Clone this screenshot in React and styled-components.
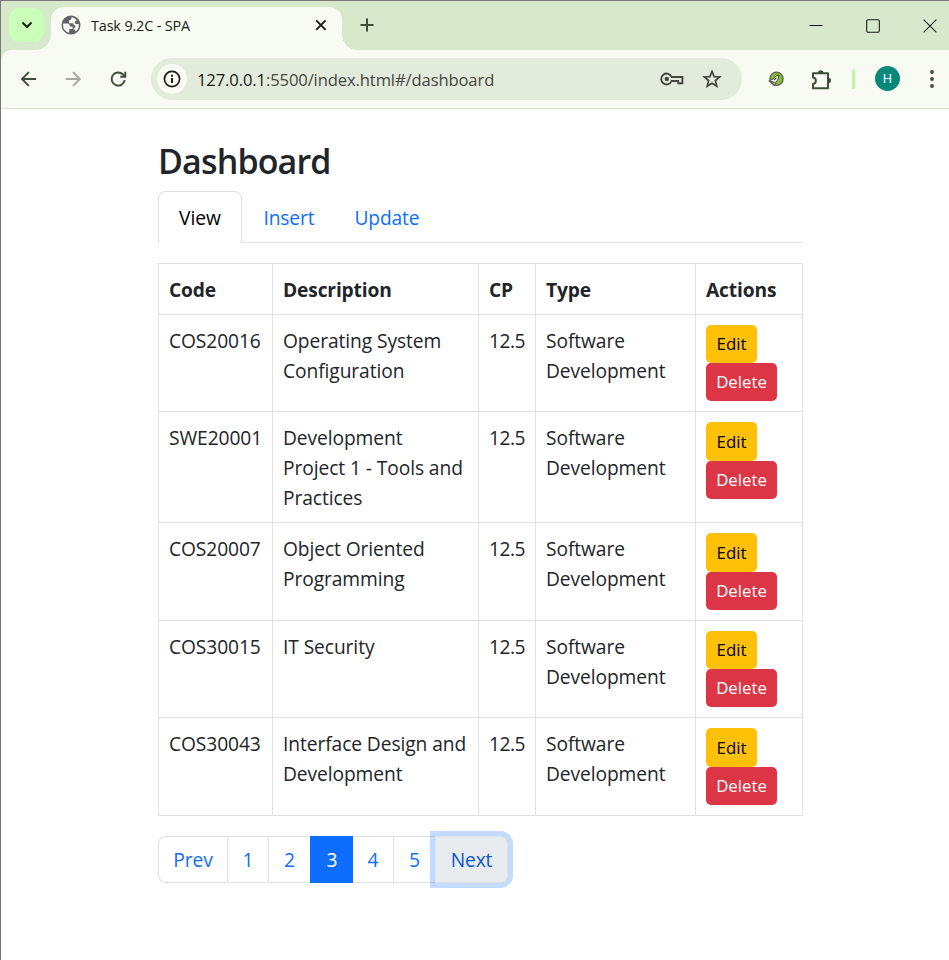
import React from 'react';
import styled, { createGlobalStyle, css } from 'styled-components';

const GlobalStyle = createGlobalStyle`
  *, *::before, *::after { box-sizing: border-box; }
  html, body { margin: 0; height: 100%; overflow: hidden; }
  body {
    background: #fff;
    color: #212529;
    font-family: "Segoe UI", "Open Sans", "Noto Sans", sans-serif;
  }
`;

const Window = styled.div`
  display: flex;
  flex-direction: column;
  width: 949px;
  height: 960px;
  border-top: 1px solid #787878;
  border-left: 1px solid #787878;
  background: #fff;
  overflow: hidden;
`;

/* ---------- browser chrome ---------- */

const TabStrip = styled.div`
  display: flex;
  flex: none;
  height: 49px;
  background: #d7e8cd;
`;

const TabSearch = styled.button`
  display: grid;
  place-items: center;
  width: 35px;
  height: 34px;
  margin: 7px 7px 0 8px;
  padding: 0;
  border: 0;
  border-radius: 11px;
  background: #c9ffb9;
  color: #161d14;
`;

const BrowserTab = styled.div`
  position: relative;
  display: flex;
  align-items: center;
  width: 291px;
  height: 43px;
  margin-top: 6px;
  padding: 0 14px 7px 10px;
  border-radius: 13px 13px 0 0;
  background: #f8fbf1;

  &::before,
  &::after {
    content: "";
    position: absolute;
    bottom: 0;
    width: 15px;
    height: 15px;
  }
  &::before {
    right: 100%;
    background: radial-gradient(circle at 0 0, transparent 14.5px, #f8fbf1 15px);
  }
  &::after {
    left: 100%;
    background: radial-gradient(circle at 100% 0, transparent 14.5px, #f8fbf1 15px);
  }
`;

const TabTitle = styled.span`
  flex: 1;
  margin-left: 10px;
  padding-top: 2px;
  color: #191d17;
  font-size: 14.4px;
  letter-spacing: -0.14px;
  line-height: 20px;
  white-space: nowrap;
`;

const GlyphButton = styled.button`
  display: grid;
  place-items: center;
  flex: none;
  width: ${(p) => p.$width || 20}px;
  height: 20px;
  padding: 0;
  border: 0;
  background: none;
  color: ${(p) => p.$color || '#3c4d38'};
`;

const NewTab = styled(GlyphButton)`
  margin: 14px 0 0 15px;
`;

const WindowControls = styled.div`
  display: flex;
  gap: 37px;
  margin: 15px 9px 0 auto;
`;

const ToolbarBacking = styled.div`
  flex: none;
  background: linear-gradient(#d7e8cd 15px, #f8fbf1 15px);
`;

const Toolbar = styled.div`
  display: flex;
  align-items: center;
  height: 59px;
  padding: 0 7px 1px 17px;
  border-bottom: 1px solid #dde5d6;
  border-top-left-radius: 11px;
  background: #f8fbf1;
`;

const NavButtons = styled.div`
  display: flex;
  gap: 25px;
`;

const AddressBar = styled.div`
  display: flex;
  flex: none;
  align-items: center;
  width: 591px;
  height: 42px;
  margin-left: 23px;
  padding: 0 20px 0 6px;
  border-radius: 21px;
  background: #e3ebdc;
`;

const SiteInfo = styled.span`
  display: grid;
  place-items: center;
  width: 30px;
  height: 30px;
  border-radius: 50%;
  background: #f8fbf1;
  color: #191d17;
`;

const Address = styled.span`
  flex: 1;
  margin-left: 10px;
  padding-top: 1px;
  color: #44483f;
  font-size: 16.6px;
  letter-spacing: -0.12px;
  white-space: nowrap;
`;

const Host = styled.span`
  color: #191d17;
`;

const AddressActions = styled.div`
  display: flex;
  align-items: center;
  gap: 18px;
`;

const Extensions = styled.div`
  display: flex;
  flex: 1;
  align-items: center;
  margin-left: 24px;
`;

const ExtensionsMenu = styled(GlyphButton)`
  margin-left: 23px;
`;

const Divider = styled.span`
  width: 3px;
  height: 20px;
  margin-left: 19px;
  border-radius: 2px;
  background: #bdf3ab;
`;

const Avatar = styled.span`
  display: grid;
  place-items: center;
  width: 25px;
  height: 25px;
  margin: 0 22px 0 auto;
  border-radius: 50%;
  background: #04897b;
  color: #fff;
  font-family: Roboto, sans-serif;
  font-size: 13px;
`;

/* ---------- page ---------- */

const Page = styled.main`
  width: 645px;
  margin: 31px 0 0 157px;
`;

const Heading = styled.h2`
  margin: 0 0 9px;
  font-size: 34px;
  font-weight: 600;
  letter-spacing: -0.85px;
  line-height: 42px;
`;

const NavTabs = styled.nav`
  display: flex;
  height: 52px;
  border-bottom: 1px solid #dee2e6;
`;

const NavTab = styled.a`
  height: 52px;
  padding: 11px 0 0 ${(p) => (p.$active ? 20 : 20.5)}px;
  border: 1px solid transparent;
  border-bottom: 0;
  border-radius: 7.5px 7.5px 0 0;
  color: #0d6efd;
  font-size: 19.2px;
  line-height: 30px;
  width: ${(p) => p.$width}px;
  letter-spacing: -0.15px;
  text-decoration: none;

  ${(p) =>
    p.$active &&
    css`
      border-color: #dee2e6;
      background: #fff;
      color: #000;
      letter-spacing: 0;
    `}
`;

const Table = styled.table`
  width: 645px;
  margin-top: 20px;
  border-collapse: collapse;
  table-layout: fixed;
  font-size: 19.2px;
  line-height: 30px;
`;

const Col = styled.col`
  width: ${(p) => p.$width}px;
`;

const Row = styled.tr`
  height: ${(p) => p.$height}px;
`;

const cell = css`
  padding: 11px 0 8px 10px;
  border: 1px solid #dee2e6;
  text-align: left;
  vertical-align: top;
  white-space: nowrap;
`;

const HeadCell = styled.th`
  ${cell}
  font-weight: 700;
  letter-spacing: -0.15px;
`;

const Cell = styled.td`
  ${cell}
  letter-spacing: ${(p) => (p.$tight ? '-0.5px' : '-0.08px')};
`;

const ActionCell = styled.td`
  ${cell}
  padding-top: 10px;
`;

const Line = styled.span`
  display: block;
`;

const Actions = styled.div`
  display: flex;
  flex-direction: column;
  align-items: flex-start;
`;

const ActionButton = styled.button`
  height: ${(p) => (p.$tall ? 39 : 38)}px;
  padding: 0;
  width: ${(p) => (p.$danger ? 71 : 51)}px;
  border: 0;
  border-radius: 5px;
  background: ${(p) => (p.$danger ? '#dc3545' : '#ffc107')};
  color: ${(p) => (p.$danger ? '#fff' : '#000')};
  font-family: inherit;
  font-size: 16.8px;
  line-height: 26px;
`;

const Pagination = styled.nav`
  display: flex;
  margin-top: 20px;
`;

const PageLink = styled.a`
  width: ${(p) => p.$width}px;
  height: 47px;
  border: 1px solid #dee2e6;
  border-right-width: 0;
  background: #fff;
  color: #0d6efd;
  font-size: 19.2px;
  letter-spacing: -0.1px;
  line-height: 46px;
  text-align: center;
  text-decoration: none;

  &:first-child {
    border-radius: 7.5px 0 0 7.5px;
  }
  &:last-child {
    border-right-width: 1px;
    border-radius: 0 7.5px 7.5px 0;
  }
  ${(p) =>
    p.$active &&
    css`
      border-color: #0d6efd;
      background: #0d6efd;
      color: #fff;
      & + a { border-left: 0; }
    `}
  ${(p) =>
    p.$focused &&
    css`
      background: #e9ecef;
      color: #0a58ca;
      box-shadow: 0 0 0 5px rgba(13, 110, 253, 0.25);
    `}
`;

/* ---------- icons ---------- */

const Svg = styled.svg`
  display: block;
  flex: none;
  fill: none;
  stroke: currentColor;
  stroke-width: ${(p) => p.$stroke || 2};
`;

const Icon = ({ w = 20, h = w, stroke, children }) => (
  <Svg width={w} height={h} viewBox={`0 0 ${w} ${h}`} $stroke={stroke}>
    {children}
  </Svg>
);

const ChevronIcon = () => <Icon w={12}><path d="M1.5 3.5 6 8l4.5-4.5" /></Icon>;
const GlobeIcon = () => (
  <Svg width="20" height="20" viewBox="2 2 20 20" color="#5f6368">
    <path
      fill="currentColor"
      stroke="none"
      d="M12 2.5a9.500 9.500 0 1 0 0 19 9.500 9.500 0 0 0 0-19ZM4 12c0-.5.1-1 .2-1.5 1.5 0 2.600 0 4 .1 1.800.1 2.700 1.100 2.800 2.800h2.600v2.700h-3.400v3.600A8 8 0 0 1 4 12Zm12.500 6.500c-.1-1.300-.9-2.100-2-2.300.2-1 .8-1.500 1.800-1.600v-2.300c-1.400-.1-2.100-.9-2.100-2.100h-4.100V7.300c1.600 0 2.500-.8 2.500-3.200a8 8 0 0 1 5.300 3.400c-1.300.1-2 .8-2 1.900 0 1 .9 1.600 2 1.700l2 .1A8 8 0 0 1 16.500 18.500Z"
    />
  </Svg>
);
const CloseIcon = () => <Icon w={12} stroke={1.9}><path d="m1.200 1.400 9.400 9.400m0-9.400-9.400 9.400" /></Icon>;
const PlusIcon = () => <Icon w={14}><path d="M7 .5v13M.5 7h13" /></Icon>;
const MinimizeIcon = () => <Icon w={14} stroke={1}><path d="M.5 6.500h13" /></Icon>;
const MaximizeIcon = () => <Icon w={14} stroke={1.1}><rect x=".7" y=".7" width="12.600" height="12.600" rx="1.200" /></Icon>;
const WindowCloseIcon = () => <Icon w={14} stroke={1.1}><path d="m.6.6 12.800 12.800m0-12.800L.6 13.400" /></Icon>;
const BackIcon = () => <Icon stroke={1.9}><path d="M18 10H4.500M10.800 3.200 4 10l6.800 6.800" /></Icon>;
const ForwardIcon = () => <Icon stroke={1.9}><path d="M2.800 10h13.500M10 3.200l6.800 6.800-6.800 6.800" /></Icon>;
const ReloadIcon = () => (
  <Icon stroke={1.9}>
    <path d="M16.700 11.200A6.600 6.600 0 1 1 14.800 5.300L17 7.500" />
    <path d="M17.300 2.700v5H12.200" />
  </Icon>
);
const InfoIcon = () => (
  <Icon w={18}>
    <circle cx="9" cy="9" r="7.600" strokeWidth="1.700" />
    <path d="M9 8v5M9 4.800v2" />
  </Icon>
);
const KeyIcon = () => (
  <Icon w={24} h={16}>
    <path d="M11.600 6H22.400v6.200h-4.200V10h-6.600A5.400 5.400 0 1 1 11.600 6Z" strokeWidth="1.900" />
    <circle cx="6.800" cy="8" r="2.200" fill="currentColor" stroke="none" />
  </Icon>
);
const StarIcon = () => (
  <Icon w={20}>
    <path d="m10 2.400 2.100 5.200 5.600.4-4.300 3.600 1.400 5.500L10 14.200l-4.800 2.900 1.400-5.500L2.300 8l5.600-.4Z" strokeWidth="1.700" />
  </Icon>
);
const RocketIcon = () => (
  <Icon w={16}>
    <circle cx="8.500" cy="7.800" r="6.600" fill="#83bd32" stroke="#5d6058" strokeWidth="1.300" />
    <path d="M10.800 4C8.300 4.400 6.400 6 5 8L.8 10l2.700.7-.4 1.600 2 .1L6.400 15l1.500-4c2-1.800 2.900-4 2.900-7Z" fill="#f3f5f0" stroke="#444843" strokeWidth="1" />
    <path d="m6 9 2.400-2.300M3.500 10.200l3.200 1.600" stroke="#444843" strokeWidth="1.200" />
  </Icon>
);
const PuzzleIcon = () => (
  <Icon w={22}>
    <path d="M3 4.200h15v15H3v-4.300c3.800-.2 3.800-6.200 0-6.400Z" strokeLinejoin="round" />
    <path d="M8 4a2.700 2.700 0 0 1 5.400 0ZM18.300 8.800a2.700 2.700 0 0 1 0 5.400Z" fill="currentColor" stroke="none" />
  </Icon>
);
const MenuIcon = () => (
  <Icon w={4} h={18}>
    <path d="M.1 2a1.900 1.900 0 1 1 3.800 0 1.900 1.900 0 0 1-3.800 0ZM.1 9a1.900 1.900 0 1 1 3.800 0 1.900 1.900 0 0 1-3.800 0ZM.1 16a1.900 1.900 0 1 1 3.800 0 1.900 1.900 0 0 1-3.800 0Z" fill="currentColor" stroke="none" />
  </Icon>
);

/* ---------- data ---------- */

const units = [
  { code: 'COS20016', lines: ['Operating System', 'Configuration'], height: 97 },
  { code: 'SWE20001', lines: ['Development', 'Project 1 - Tools and', 'Practices'], height: 111, tall: true },
  { code: 'COS20007', lines: ['Object Oriented', 'Programming'], height: 98, tall: true },
  { code: 'COS30015', lines: ['IT Security'], height: 97 },
  { code: 'COS30043', lines: ['Interface Design and', 'Development'], height: 98, tall: true },
];

const columns = [
  ['Code', 114],
  ['Description', 206],
  ['CP', 57],
  ['Type', 160],
  ['Actions', 107],
];

const pages = [
  { label: 'Prev', width: 69 },
  { label: '1', width: 41 },
  { label: '2', width: 42 },
  { label: '3', width: 43, active: true },
  { label: '4', width: 40 },
  { label: '5', width: 42 },
  { label: 'Next', width: 73, focused: true },
];

export default function App() {
  return (
    <Window>
      <GlobalStyle />
      <TabStrip>
        <TabSearch><ChevronIcon /></TabSearch>
        <BrowserTab>
          <GlobeIcon />
          <TabTitle>Task 9.2C - SPA</TabTitle>
          <GlyphButton $width={14} $color="#191d17"><CloseIcon /></GlyphButton>
        </BrowserTab>
        <NewTab><PlusIcon /></NewTab>
        <WindowControls>
          <GlyphButton $color="#000"><MinimizeIcon /></GlyphButton>
          <GlyphButton $color="#191d17"><MaximizeIcon /></GlyphButton>
          <GlyphButton $color="#191d17"><WindowCloseIcon /></GlyphButton>
        </WindowControls>
      </TabStrip>
      <ToolbarBacking>
        <Toolbar>
          <NavButtons>
            <GlyphButton><BackIcon /></GlyphButton>
            <GlyphButton $color="#a3a8a0"><ForwardIcon /></GlyphButton>
            <GlyphButton><ReloadIcon /></GlyphButton>
          </NavButtons>
          <AddressBar>
            <SiteInfo><InfoIcon /></SiteInfo>
            <Address><Host>127.0.0.1</Host>:5500/index.html#/dashboard</Address>
            <AddressActions>
              <GlyphButton $width={24} $color="#44483f"><KeyIcon /></GlyphButton>
              <GlyphButton $color="#44483f"><StarIcon /></GlyphButton>
            </AddressActions>
          </AddressBar>
          <Extensions>
            <GlyphButton><RocketIcon /></GlyphButton>
            <ExtensionsMenu $width={24}><PuzzleIcon /></ExtensionsMenu>
            <Divider />
            <Avatar>H</Avatar>
            <GlyphButton><MenuIcon /></GlyphButton>
          </Extensions>
        </Toolbar>
      </ToolbarBacking>

      <Page>
        <Heading>Dashboard</Heading>
        <NavTabs>
          <NavTab $width={84} $active>View</NavTab>
          <NavTab $width={91}>Insert</NavTab>
          <NavTab $width={107}>Update</NavTab>
        </NavTabs>

        <Table>
          <colgroup>
            {columns.map(([name, width]) => <Col key={name} $width={width} />)}
          </colgroup>
          <thead>
            <Row $height={51}>
              {columns.map(([name]) => <HeadCell key={name}>{name}</HeadCell>)}
            </Row>
          </thead>
          <tbody>
            {units.map((unit) => (
              <Row key={unit.code} $height={unit.height}>
                <Cell>{unit.code}</Cell>
                <Cell>{unit.lines.map((line) => <Line key={line}>{line}</Line>)}</Cell>
                <Cell $tight>12.5</Cell>
                <Cell><Line>Software</Line><Line>Development</Line></Cell>
                <ActionCell>
                  <Actions>
                    <ActionButton $tall={unit.tall}>Edit</ActionButton>
                    <ActionButton $danger>Delete</ActionButton>
                  </Actions>
                </ActionCell>
              </Row>
            ))}
          </tbody>
        </Table>

        <Pagination>
          {pages.map((p) => (
            <PageLink key={p.label} $width={p.width} $active={p.active} $focused={p.focused}>
              {p.label}
            </PageLink>
          ))}
        </Pagination>
      </Page>
    </Window>
  );
}
